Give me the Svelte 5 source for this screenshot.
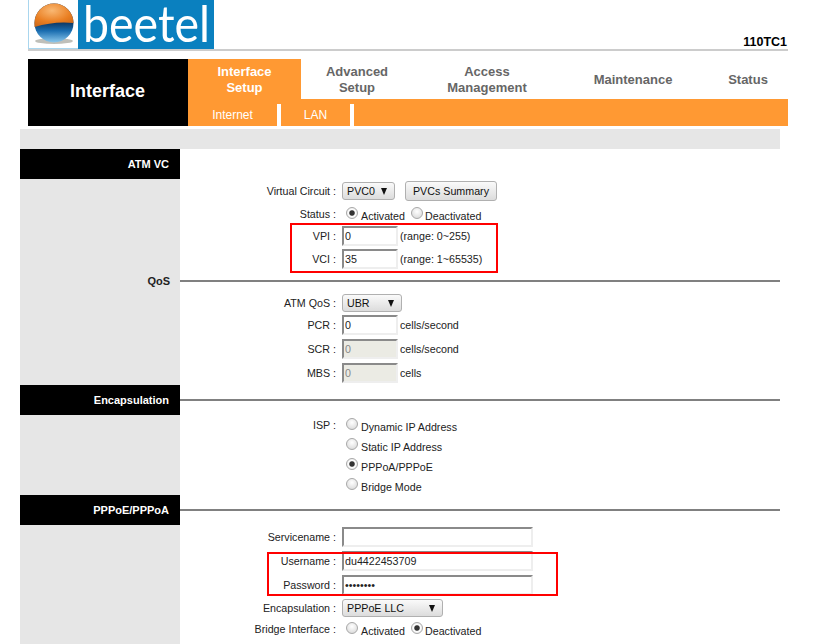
<script>
  const nav = [
    { label: ['Interface', 'Setup'], cls: 'active w1' },
    { label: ['Advanced', 'Setup'], cls: 'w2' },
    { label: ['Access', 'Management'], cls: 'w3' },
    { label: ['Maintenance'], cls: 'w4' },
    { label: ['Status'], cls: 'w5' }
  ];
</script>

{#snippet arrowSelect(value, cls)}
  <span class="selwrap {cls}">
    <select><option>{value}</option></select>
    <i class="arrow"></i>
  </span>
{/snippet}

{#snippet onoff(first)}
  <label class="opt"><input type="radio" name="r{first}" checked={first === 'status'} /><span>Activated</span></label>
  <label class="opt second"><input type="radio" name="r{first}" checked={first !== 'status'} /><span>Deactivated</span></label>
{/snippet}

<div class="page">
  <header class="top">
    <div class="logo">
      <div class="mark">
        <svg width="50" height="48" viewBox="0 0 50 48">
          <defs>
            <radialGradient id="o" cx="0.45" cy="0.3" r="0.8">
              <stop offset="0" stop-color="#f9b873" />
              <stop offset="0.6" stop-color="#ea7f22" />
              <stop offset="1" stop-color="#c9661a" />
            </radialGradient>
            <linearGradient id="b" x1="0" y1="0" x2="0" y2="1">
              <stop offset="0.45" stop-color="#0d2f55" />
              <stop offset="0.7" stop-color="#1a6db0" />
              <stop offset="1" stop-color="#8cc8ec" />
            </linearGradient>
          </defs>
          <ellipse cx="25" cy="41" rx="19" ry="3" fill="#8a8a80" opacity="0.55" />
          <circle cx="25" cy="23" r="19.5" fill="url(#b)" />
          <path d="M5.5 23 A19.5 19.5 0 0 1 44.5 23 Q25 21 5.5 27 Z" fill="url(#o)" />
        </svg>
      </div>
      <svg class="word" width="136" height="49" viewBox="0 0 136 49">
        <text x="5" y="42" textLength="127" lengthAdjust="spacingAndGlyphs">beetel</text>
      </svg>
    </div>
    <div class="model">110TC1</div>
  </header>

  <nav class="nav">
    <div class="title">Interface</div>
    <div class="navright">
      <div class="tabs">
        {#each nav as item}
          <div class="tab {item.cls}">
            {#each item.label as line}<div>{line}</div>{/each}
          </div>
        {/each}
      </div>
      <div class="sub">
        <div class="subitem s1">Internet</div>
        <div class="subitem s2">LAN</div>
      </div>
    </div>
  </nav>

  <div class="strip"></div>

  <main class="form">
    <div class="head black"><div class="headlabel">ATM VC</div></div>

    <div class="row h24">
      <div class="lab">Virtual Circuit :</div>
      <div class="val">
        {@render arrowSelect('PVC0', 'sel-pvc')}
        <button class="btn">PVCs Summary</button>
      </div>
    </div>
    <div class="row h21">
      <div class="lab">Status :</div>
      <div class="val">{@render onoff('status')}</div>
    </div>
    <div class="row h23">
      <div class="lab">VPI :</div>
      <div class="val"><input class="txt" value="0" /><span class="unit">(range: 0~255)</span></div>
    </div>
    <div class="row h23">
      <div class="lab">VCI :</div>
      <div class="val"><input class="txt" value="35" /><span class="unit">(range: 1~65535)</span></div>
    </div>

    <div class="head qos"><div class="headlabel">QoS</div><div class="rule"></div></div>

    <div class="row h21">
      <div class="lab">ATM QoS :</div>
      <div class="val">{@render arrowSelect('UBR', 'sel-ubr')}</div>
    </div>
    <div class="row h24">
      <div class="lab">PCR :</div>
      <div class="val"><input class="txt" value="0" /><span class="unit">cells/second</span></div>
    </div>
    <div class="row h24">
      <div class="lab">SCR :</div>
      <div class="val"><input class="txt" value="0" disabled /><span class="unit">cells/second</span></div>
    </div>
    <div class="row h24">
      <div class="lab">MBS :</div>
      <div class="val"><input class="txt" value="0" disabled /><span class="unit">cells</span></div>
    </div>

    <div class="head black"><div class="headlabel">Encapsulation</div><div class="rule"></div></div>

    <div class="row h20">
      <div class="lab">ISP :</div>
      <div class="val"><label class="opt"><input type="radio" name="isp" /><span>Dynamic IP Address</span></label></div>
    </div>
    <div class="row h20">
      <div class="lab"></div>
      <div class="val"><label class="opt"><input type="radio" name="isp" /><span>Static IP Address</span></label></div>
    </div>
    <div class="row h20">
      <div class="lab"></div>
      <div class="val"><label class="opt"><input type="radio" name="isp" checked /><span>PPPoA/PPPoE</span></label></div>
    </div>
    <div class="row h20">
      <div class="lab"></div>
      <div class="val"><label class="opt"><input type="radio" name="isp" /><span>Bridge Mode</span></label></div>
    </div>

    <div class="head black"><div class="headlabel">PPPoE/PPPoA</div><div class="rule"></div></div>

    <div class="row h24">
      <div class="lab">Servicename :</div>
      <div class="val"><input class="txt wide" value="" /></div>
    </div>
    <div class="row h24">
      <div class="lab">Username :</div>
      <div class="val"><input class="txt wide" value="du4422453709" /></div>
    </div>
    <div class="row h24">
      <div class="lab">Password :</div>
      <div class="val"><input class="txt wide" type="password" value="12345678" /></div>
    </div>
    <div class="row h22">
      <div class="lab">Encapsulation :</div>
      <div class="val">{@render arrowSelect('PPPoE LLC', 'sel-llc')}</div>
    </div>
    <div class="row h20">
      <div class="lab">Bridge Interface :</div>
      <div class="val">{@render onoff('bridge')}</div>
    </div>

    <div class="redbox box1"></div>
    <div class="redbox box2"></div>
  </main>
</div>

<style>
  :global(body) { margin: 0; background: #fff; }
  .page {
    width: 818px;
    height: 644px;
    overflow: hidden;
    font-family: "Liberation Sans", Arial, sans-serif;
    font-size: 10.7px;
    color: #222;
  }
  .top {
    height: 49px;
    width: 760px;
    margin-left: 28px;
    border-bottom: 2px solid #ccc;
    display: flex;
    justify-content: space-between;
    align-items: flex-end;
  }
  .logo { display: flex; width: 186px; height: 49px; }
  .mark {
    width: 50px;
    height: 49px;
    box-sizing: border-box;
    border: 1px solid #a9d6ee;
    border-width: 0 0 1px 1px;
    background: #fff;
    overflow: hidden;
  }
  .word { display: block; background: #0a80bf; }
  .word text {
    fill: #fff;
    font-family: Lato, "Open Sans", sans-serif;
    font-size: 51px;
  }
  .model {
    font-weight: bold;
    font-size: 12.5px;
    color: #000;
    line-height: 14px;
    padding-right: 1px;
  }
  .nav { display: flex; width: 760px; height: 67px; margin: 8px 0 0 28px; }
  .title {
    width: 160px;
    background: #000;
    color: #fff;
    font-weight: bold;
    font-size: 18px;
    display: flex;
    align-items: center;
    justify-content: center;
    box-sizing: border-box;
    padding: 0 1px 3px 0;
  }
  .navright { flex: 1; display: flex; flex-direction: column; }
  .tabs { display: flex; height: 40px; }
  .tab {
    display: flex;
    flex-direction: column;
    align-items: center;
    justify-content: center;
    font-weight: bold;
    font-size: 13px;
    line-height: 16px;
    color: #666;
    padding-top: 1px;
    box-sizing: border-box;
  }
  .active { background: #f93; color: #fff; }
  .w1 { width: 113px; }
  .w2 { width: 112px; }
  .w3 { width: 148px; }
  .w4 { width: 144px; }
  .w5 { width: 83px; padding-left: 3px; }
  .sub {
    height: 27px;
    background: #f93;
    display: flex;
    align-items: flex-end;
  }
  .subitem {
    height: 22px;
    box-sizing: border-box;
    border-right: 4px solid #fff;
    color: #fff;
    font-size: 12px;
    line-height: 22px;
    text-align: center;
  }
  .s1 { width: 93px; }
  .s2 { width: 73px; }
  .strip { width: 760px; height: 20px; margin: 3px 0 0 20px; background: #e6e6e6; }
  .form {
    position: relative;
    width: 760px;
    height: 495px;
    margin-left: 20px;
    background: linear-gradient(to right, #e6e6e6 160px, #fff 160px);
  }
  .head { display: grid; grid-template-columns: 160px 1fr; align-items: center; }
  .head.black { height: 30px; }
  .head.qos { height: 22px; }
  .headlabel {
    height: 100%;
    display: flex;
    align-items: center;
    justify-content: flex-end;
    padding-right: 11px;
    box-sizing: border-box;
    font-weight: bold;
    font-size: 11px;
  }
  .black .headlabel { background: #000; color: #fff; }
  .qos .headlabel { color: #222; padding-right: 10px; }
  .rule { height: 2px; background: #808080; }
  .row {
    display: grid;
    grid-template-columns: 156px 1fr;
    column-gap: 6px;
    margin-left: 160px;
    align-items: center;
  }
  .h20 { height: 20px; }
  .h21 { height: 21px; }
  .h22 { height: 22px; }
  .h23 { height: 23px; }
  .h24 { height: 24px; }
  .lab { text-align: right; white-space: nowrap; }
  .val { display: flex; align-items: center; white-space: nowrap; }
  .txt {
    width: 56px;
    height: 20px;
    box-sizing: border-box;
    border: 2px solid;
    border-color: #8a8a8a #eeeeee #eeeeee #8a8a8a;
    padding: 0 1px;
    margin: 0;
    font: 10.7px "Liberation Sans", Arial, sans-serif;
    color: #222;
    background: #fff;
    outline: none;
  }
  .txt:disabled { background: #ebebe4; color: #888; }
  .wide { width: 191px; }
  .unit { margin-left: 2px; }
  .selwrap { position: relative; display: inline-block; height: 18px; }
  .selwrap select {
    appearance: none;
    height: 18px;
    width: 100%;
    box-sizing: border-box;
    border: 1px solid #b0b0b0;
    border-radius: 3px;
    padding: 0 0 0 4px;
    margin: 0;
    font: 10.7px "Liberation Sans", Arial, sans-serif;
    color: #111;
    background: linear-gradient(#fafafa, #dcdcdc);
    display: block;
  }
  .sel-pvc { width: 53px; }
  .sel-ubr { width: 60px; }
  .sel-llc { width: 101px; }
  .arrow {
    position: absolute;
    right: 8px;
    top: 6px;
    width: 0;
    height: 0;
    border-left: 3px solid transparent;
    border-right: 3px solid transparent;
    border-top: 7px solid #111;
    pointer-events: none;
  }
  .btn {
    width: 92px;
    height: 20px;
    box-sizing: border-box;
    margin: 0 0 0 10px;
    padding: 0;
    border: 1px solid #b0b0b0;
    border-radius: 3px;
    background: linear-gradient(#fafafa, #dcdcdc);
    font: 10.7px "Liberation Sans", Arial, sans-serif;
    color: #111;
  }
  .opt { display: inline-flex; align-items: center; }
  .opt input {
    appearance: none;
    width: 12px;
    height: 12px;
    margin: 0 3px 0 4px;
    border: 1px solid #a8a8a8;
    border-radius: 50%;
    box-sizing: border-box;
    background: radial-gradient(circle at 50% 35%, #fff, #d4d4d4);
    position: relative;
    top: -1px;
  }
  .opt input:checked {
    background: radial-gradient(circle, #333 0 2.2px, #999 2.8px, #fff 3.2px, #dcdcdc 100%);
  }
  .opt span { position: relative; top: 2px; }
  .second input { margin-left: 6px; margin-right: 2px; }
  .redbox {
    position: absolute;
    border: 2px solid #f00;
    box-sizing: border-box;
    pointer-events: none;
  }
  .box1 { left: 270px; top: 74px; width: 208px; height: 50px; }
  .box2 { left: 247px; top: 403px; width: 291px; height: 44px; }
</style>
